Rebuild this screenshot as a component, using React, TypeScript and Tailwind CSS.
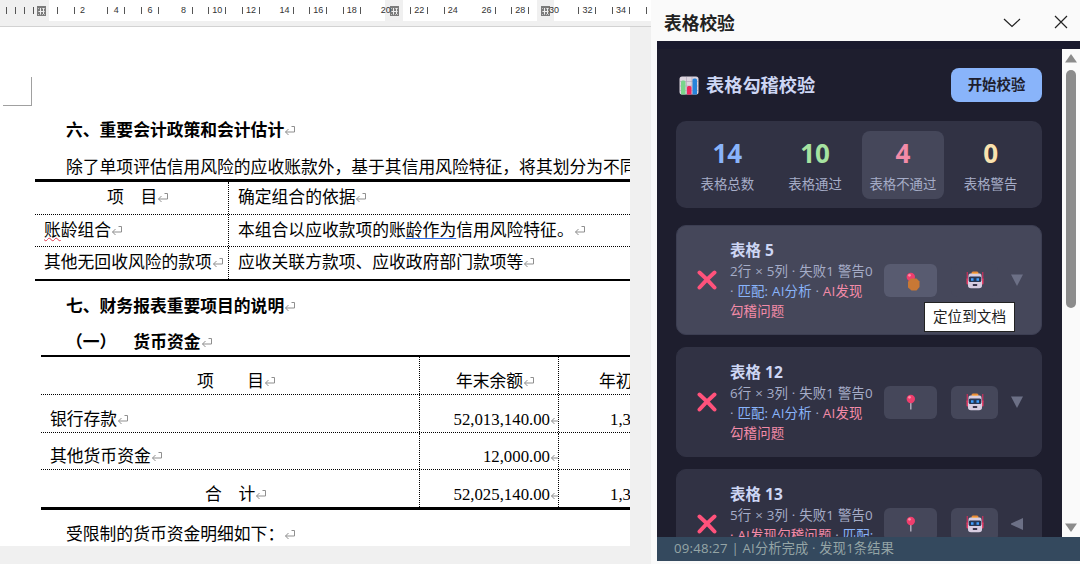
import type { ReactNode } from "react"
import clsx from "clsx"

type Mark = { n: string; l?: boolean; r?: boolean; table?: "left" | "right" }

const marks: Mark[] = [
  { n: "2", l: true },
  { n: "4", l: true, r: true },
  { n: "6", l: true, r: true },
  { n: "8", r: true },
  { n: "10", l: true, r: true },
  { n: "12", l: true, r: true },
  { n: "14", r: true },
  { n: "16", l: true, r: true },
  { n: "18", l: true, r: true },
  { n: "20", table: "right" },
  { n: "22", l: true, r: true },
  { n: "24", l: true },
  { n: "26", r: true },
  { n: "28", l: true, r: true },
  { n: "30", table: "left" },
  { n: "32", l: true, r: true },
  { n: "34", l: true, r: true },
  { n: "", l: true },
]

const stats = [
  { value: 14, label: "表格总数", color: "text-[#89b4fa]" },
  { value: 10, label: "表格通过", color: "text-[#a6e3a1]" },
  { value: 4, label: "表格不通过", color: "text-[#f38ba8]", active: true },
  { value: 0, label: "表格警告", color: "text-[#f9e2af]" },
]

const Tick = ({ show = true }: { show?: boolean }) => (
  <span className={clsx("h-[7px] w-px shrink-0", show && "bg-[#555]")} />
)

const TableHandle = () => (
  <svg width="9" height="10" viewBox="0 0 9 10" className="shrink-0" shapeRendering="crispEdges">
    <rect width="9" height="10" fill="#7b7b7b" />
    <path d="M1 2.500h7M1 5.500h7M1 8.500h7" stroke="#c4c4c4" strokeDasharray="1 1" />
    <path d="M3.500 2v6M6.500 2v6M2 5.500h5" stroke="#eee" />
  </svg>
)

const Return = () => (
  <svg width="12" height="10" viewBox="0 0 12 10" className="inline-block shrink-0" fill="none" stroke="#8f8f8f">
    <path d="M7.500 0.500h3v5.500H1.500M4.500 3L1.500 6l3 3" />
  </svg>
)

const ChartIcon = () => (
  <svg width="20" height="19" viewBox="0 0 20 19">
    <rect x="0.500" y="0.500" width="19" height="18" rx="2.500" fill="#ddd5df" />
    <path d="M1 5.500h18M1 10h18M1 14.500h18M7.500 1v17M13 1v17" stroke="#b5aabb" strokeWidth="0.700" />
    <path d="M2 18.500V6a1.500 1.500 0 0 1 1.500-1.500H5A1.500 1.500 0 0 1 6.500 6v12.500z" fill="#79d58b" />
    <path d="M8 18.500V11.500a1.500 1.500 0 0 1 1.500-1.500h1.500a1.500 1.500 0 0 1 1.500 1.500v7z" fill="#ed2860" />
    <path d="M13.500 18.500V4A1.500 1.500 0 0 1 15 2.500h1.500A1.500 1.500 0 0 1 18 4v14.500z" fill="#2684dc" />
  </svg>
)

const CrossIcon = () => (
  <svg width="20" height="20" viewBox="0 0 20 20" className="shrink-0">
    <path d="M2.500 2.500c4 3.500 11 10.500 15 15M17.500 2.500c-4 3.500-11 10.500-15 15" stroke="#ff527b" strokeWidth="4" strokeLinecap="round" fill="none" />
  </svg>
)

const PinIcon = ({ pressed }: { pressed?: boolean }) => (
  <svg width="20" height="20" viewBox="0 0 20 20" className="overflow-visible">
    {!pressed && <path d="M9.800 9v8.500" stroke="#b5b0bf" strokeWidth="1.400" />}
    <circle cx="9.800" cy="7" r="4.200" fill="#ef3e6d" />
    <circle cx="8.500" cy="5.300" r="1.400" fill="#ff8ba5" />
    {pressed && <path d="M10 8.500h5.500l3 3v5.500l-3 3.500H10.500L7 17.500V11.500z" fill="#c87835" />}
  </svg>
)

const RobotIcon = () => (
  <svg width="20" height="20" viewBox="0 0 20 20">
    <path d="M2.300 2v8M17.700 2v8" stroke="#b8325c" strokeWidth="1.400" />
    <path d="M1.500 8.500H4v6H2.800A1.300 1.300 0 0 1 1.500 13zM18.500 8.500H16v6h1.200a1.300 1.300 0 0 0 1.300-1.500z" fill="#e83e68" />
    <rect x="6.500" y="1.500" width="7" height="3.500" rx="1.500" fill="#e98a36" />
    <path d="M5.500 3.500h9c1.500 0 2 1 2 2.500l.5 5v4.500c0 1.800-1 2.800-3 2.800H6c-2 0-3-1-3-2.800V11l.5-5c0-1.500.5-2.500 2-2.500z" fill="#d8cde1" />
    <path d="M7.500 3.500h5" stroke="#f2b05e" />
    <rect x="3.700" y="6.500" width="12.600" height="5.500" rx="1.500" fill="#283754" />
    <path d="M6 8.300h2.500v2.500H6zM11.500 8.300H14v2.500h-2.500z" fill="#419fff" />
    <rect x="7.800" y="14" width="4.400" height="2" rx="0.500" fill="#3b354b" />
  </svg>
)

const Ruler = () => (
  <div className="flex h-[27px] flex-col border-b border-[#d2d2d2] bg-[#f0f0f0]">
    <div className="flex h-[21px] items-center font-['Liberation_Sans'] text-[9px] leading-none text-[#333]">
      <div className="flex h-full w-[49px] shrink-0 items-center gap-[8px] bg-[#f0f0f0] pl-[6px]">
        <Tick />
        <Tick />
        <Tick />
        <div className="flex items-center gap-[3px]">
          <Tick />
          <TableHandle />
        </div>
      </div>
      <div className="flex h-full w-[16.800px] shrink-0 items-center justify-center bg-white">
        <Tick />
      </div>
      <div className="flex h-full min-w-0 flex-1 overflow-hidden bg-white">
        {marks.map((m) => (
          <div key={m.n} className="flex w-[33.660px] shrink-0 items-center justify-center">
            {m.table === "right" && (
              <div className="flex w-full items-center pl-[12px]">
                <span className="z-10 w-[9px] shrink-0">{m.n}</span>
                <div className="-ml-[5px] flex h-[21px] w-[18px] shrink-0 items-center bg-[#f0f0f0] pl-[5px]">
                  <TableHandle />
                </div>
              </div>
            )}
            {m.table === "left" && (
              <div className="flex w-full items-center">
                <div className="flex h-[21px] w-[17px] shrink-0 items-center bg-[#f0f0f0] pl-1">
                  <TableHandle />
                </div>
                <span className="z-10 -ml-[5px]">{m.n}</span>
              </div>
            )}
            {!m.table && (
              <>
                <Tick show={!!m.l} />
                <span className="w-[16px] text-center">{m.n}</span>
                <Tick show={!!m.r} />
              </>
            )}
          </div>
        ))}
      </div>
    </div>
  </div>
)

const cellLine = "flex items-center whitespace-nowrap"
const dotRow = "border-b border-dotted border-black"
const dotCol = "border-r border-dotted border-black"

const PolicyTable = () => (
  <div className="ml-[35px] border-t-[3px] border-b-2 border-black">
    <div className={clsx("flex h-[33px]", dotRow)}>
      <div className={clsx(cellLine, dotCol, "w-[194px] shrink-0 pl-[72px]")}>项　目<Return /></div>
      <div className={clsx(cellLine, "pl-[9px]")}>确定组合的依据<Return /></div>
    </div>
    <div className={clsx("flex h-8", dotRow)}>
      <div className={clsx(cellLine, dotCol, "w-[194px] shrink-0 pl-[9px]")}>
        <span className="underline decoration-[#e03b50] decoration-wavy decoration-1 underline-offset-1">账</span>龄组合<Return />
      </div>
      <div className={clsx(cellLine, "pl-[9px]")}>
        本组合以应收款项的账
        <span className="underline decoration-[#2f6be0] decoration-1 underline-offset-2">龄作为</span>
        信用风险特征。<Return />
      </div>
    </div>
    <div className="flex h-8">
      <div className={clsx(cellLine, dotCol, "w-[194px] shrink-0 pl-[9px]")}>其他无回收风险的款项<Return /></div>
      <div className={clsx(cellLine, "pl-[9px]")}>应收关联方款项、应收政府部门款项等<Return /></div>
    </div>
  </div>
)

const cashRows = [
  { h: "h-[38px]", name: "项　　目", pad: "pl-[156px]", end: "年末余额", start: "年初", head: true },
  { h: "h-[38px]", name: "银行存款", pad: "pl-[9px]", end: "52,013,140.00", start: "1,3" },
  { h: "h-[37px]", name: "其他货币资金", pad: "pl-[9px]", end: "12,000.00", start: "" },
  { h: "h-[37px]", name: "合　计", pad: "pl-[164px]", end: "52,025,140.00", start: "1,3" },
]

const CashTable = () => (
  <div className="ml-[41px] border-t-2 border-b-[3px] border-black">
    {cashRows.map((row, i) => (
      <div key={row.name} className={clsx("flex leading-5", row.h, i < 3 && dotRow)}>
        <div className={clsx("flex w-[379px] shrink-0 items-end pb-[2px]", dotCol, row.pad)}>
          <span className={cellLine}>{row.name}<Return /></span>
        </div>
        <div className={clsx("flex w-[139px] shrink-0 items-end overflow-hidden pb-[2px]", dotCol, row.head ? "pl-9" : "justify-end")}>
          <span className={cellLine}>
            {row.end}
            {row.head ? <Return /> : <span className="flex w-[8px] overflow-hidden"><Return /></span>}
          </span>
        </div>
        <div className={clsx("flex items-end whitespace-nowrap pb-[2px]", row.head ? "pl-10" : "pl-[51px]")}>{row.start}</div>
      </div>
    ))}
  </div>
)

const WordDocument = () => (
  <div className="flex w-[651px] shrink-0 flex-col bg-[#f0f0f0]">
    <Ruler />
    <div className="h-[519px] w-[630px] overflow-hidden bg-white font-['Liberation_Serif','Noto_Sans_CJK_SC',serif] text-[16.800px] text-black">
      <div className="mt-[50px] ml-[3px] size-[29px] border-r border-b border-[#a0a0a0]" />
      <h2 className={clsx(cellLine, "mt-[9px] h-[30px] pt-[2px] pl-[66px] font-bold")}>六、重要会计政策和会计估计<Return /></h2>
      <p className={clsx(cellLine, "h-[34px] pt-[11px] pl-[66px]")}>
        除了单项评估信用风险的应收账款外，基于其信用风险特征，将其划分为不同
      </p>
      <PolicyTable />
      <h2 className={clsx(cellLine, "h-[50px] pt-[2px] pl-[66px] font-bold")}>七、财务报表重要项目的说明<Return /></h2>
      <h3 className={clsx(cellLine, "h-[24px] pl-[66px] font-bold")}>（一）<span className="ml-[17px]">货币资金</span><Return /></h3>
      <CashTable />
      <p className={clsx(cellLine, "h-[36px] pt-[14px] pl-[66px]")}>受限制的货币资金明细如下：<Return /></p>
    </div>
  </div>
)

type CardProps = { title: string; active?: boolean; closed?: boolean; children: ReactNode }

const ResultCard = ({ title, active, closed, children }: CardProps) => (
  <div
    className={clsx(
      "relative flex h-[110px] shrink-0 items-center rounded-[10px] border pl-5",
      active ? "border-[#3c3e52] bg-[#45475a]" : "border-[#313244] bg-[#313244]",
    )}
  >
    <CrossIcon />
    <div className="ml-[13px] w-[154px] shrink-0 whitespace-nowrap">
      <h3 className="text-[15.500px] leading-[22px] font-bold text-[#cdd6f4]">{title}</h3>
      <div className="text-[13.400px] leading-[20px] tracking-[0.200px] text-[#a6adc8]">{children}</div>
    </div>
    <button className={clsx("flex h-[33px] w-[53px] shrink-0 items-center justify-center rounded-md", active ? "bg-[#585b70]" : "bg-[#45475a]")}>
      <PinIcon pressed={active} />
    </button>
    <button className="ml-[14px] flex h-[33px] w-[47px] shrink-0 items-center justify-center rounded-md bg-[#45475a]">
      <RobotIcon />
    </button>
    <svg width="12" height="12" viewBox="0 0 12 12" className="ml-[13px] shrink-0" fill="#6c7086">
      <path d={closed ? "M12 0v12L-1 6z" : "M0 0.500h12L6 12z"} />
    </svg>
    {active && (
      <div className="absolute top-[76px] left-[247px] flex h-[30px] w-[91px] items-center justify-center border border-[#222] bg-white text-[14.600px] whitespace-nowrap text-[#222]">
        定位到文档
      </div>
    )}
  </div>
)

const Blue = ({ children }: { children: ReactNode }) => <span className="text-[#89b4fa]">{children}</span>
const Pink = ({ children }: { children: ReactNode }) => <span className="text-[#f38ba8]">{children}</span>

const CheckPanel = () => (
  <div className="ml-[6px] flex min-w-0 flex-1 flex-col font-['Open_Sans','Noto_Sans_CJK_SC',sans-serif]">
    <div className="flex h-[41px] shrink-0 items-center pt-[5px] pl-[7px]">
      <h1 className="text-[17.700px] font-bold text-[#222]">表格校验</h1>
      <svg width="18" height="10" viewBox="0 0 18 10" className="ml-auto" fill="none" stroke="#222" strokeWidth="1.200">
        <path d="M1 1l8 7.500L17 1" />
      </svg>
      <svg width="14" height="14" viewBox="0 0 14 14" className="mr-[12px] mb-[3px] ml-[33px]" fill="none" stroke="#222" strokeWidth="1.200">
        <path d="M1 1l12 12M13 1L1 13" />
      </svg>
    </div>
    <div className="h-2 shrink-0 bg-[#1a1a2e]" />
    <div className="flex h-[488px] shrink-0">
      <div className="flex w-[405px] shrink-0 flex-col overflow-hidden bg-[#1e1e2e] pt-[19px] pr-5 pl-[19px]">
        <div className="flex h-[34px] shrink-0 items-center pl-[3px]">
          <ChartIcon />
          <h2 className="ml-[7px] pt-px text-[18.200px] font-bold text-[#cdd6f4]">表格勾稽校验</h2>
          <button className="ml-auto h-[34px] w-[91px] rounded-lg bg-[#89b4fa] text-[14.400px] font-bold text-[#1e1e2e]">开始校验</button>
        </div>
        <div className="mt-[19px] grid h-[87px] shrink-0 grid-cols-4 gap-[5px] rounded-[10px] bg-[#313244] px-[10px] pt-[10px] pb-[9px]">
          {stats.map((s) => (
            <div key={s.label} className={clsx("flex flex-col items-center rounded-lg pt-[5px]", s.active && "bg-[#45475a]")}>
              <div className={clsx("text-[26px] leading-[34px] font-bold", s.color)}>{s.value}</div>
              <div className="mt-1 text-[13.400px] leading-5 whitespace-nowrap text-[#a6adc8]">{s.label}</div>
            </div>
          ))}
        </div>
        <div className="mt-[17px] flex flex-col gap-3">
          <ResultCard title="表格 5" active>
            <div>2行 × 5列 · 失败1 警告0</div>
            <div>· <Blue>匹配: AI分析</Blue> · <Pink>AI发现</Pink></div>
            <div><Pink>勾稽问题</Pink></div>
          </ResultCard>
          <ResultCard title="表格 12">
            <div>6行 × 3列 · 失败1 警告0</div>
            <div>· <Blue>匹配: AI分析</Blue> · <Pink>AI发现</Pink></div>
            <div><Pink>勾稽问题</Pink></div>
          </ResultCard>
          <ResultCard title="表格 13" closed>
            <div>5行 × 3列 · 失败1 警告0</div>
            <div><Pink>· AI发现勾稽问题</Pink> · <Blue>匹配:</Blue></div>
            <div className="h-5" />
          </ResultCard>
        </div>
      </div>
      <div className="flex w-[18px] flex-col items-center bg-[#fafafa] py-[5px]">
        <svg width="12" height="9" viewBox="0 0 12 9" fill="#8b8b8b"><path d="M6 0l6 8.500H0z" /></svg>
        <div className="mt-[7px] h-[238px] w-[10px] rounded-[5px] bg-[#8b8b8b]" />
        <svg width="12" height="9" viewBox="0 0 12 9" className="mt-auto" fill="#8b8b8b"><path d="M6 9l6-8.500H0z" /></svg>
      </div>
    </div>
    <div className="flex h-6 shrink-0 items-center bg-[#34495e] pl-[17px] text-[13.200px] tracking-[0.200px] whitespace-nowrap text-[#95a5a6]">
      09:48:27 | AI分析完成 · 发现1条结果
    </div>
  </div>
)

export default function App() {
  return (
    <div className="flex h-[564px] w-[1080px] overflow-hidden bg-[#fafafa]">
      <WordDocument />
      <CheckPanel />
    </div>
  )
}
